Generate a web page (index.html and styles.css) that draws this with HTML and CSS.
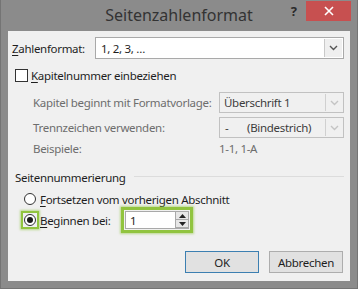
FILE: index.html
```html
<!DOCTYPE html>
<html lang="de">
<head>
<meta charset="utf-8">
<link rel="stylesheet" href="styles.css">
</head>
<body>
<div class="window">
  <div class="titlebar">
    <span></span>
    <span class="title">Seitenzahlenformat</span>
    <div class="controls">
      <span class="help">?</span>
      <span class="close"><svg width="10" height="10" viewBox="0 0 10 10"><path d="M1 1 L9 9 M9 1 L1 9" stroke="#fff" stroke-width="1.6" fill="none"/></svg></span>
    </div>
  </div>
  <div class="content">
    <div class="row format-row">
      <span class="lbl-format"><u>Z</u>ahlenformat:</span>
      <div class="combo main-combo">
        <span class="combo-val">1, 2, 3, …</span>
        <span class="combo-arrow"><svg width="9" height="6" viewBox="0 0 9 6"><path d="M1 1 L4.5 4.5 L8 1" stroke="#555" stroke-width="1.4" fill="none"/></svg></span>
      </div>
    </div>
    <div class="row check-row">
      <span class="checkbox"></span>
      <span><u>K</u>apitelnummer einbeziehen</span>
    </div>
    <div class="row sub-row first-sub">
      <span class="sub-lbl disabled">Kapitel beginnt mit Formatvorlage:</span>
      <div class="combo dis-combo">
        <span class="combo-val">Überschrift 1</span>
        <span class="combo-arrow"><svg width="9" height="6" viewBox="0 0 9 6"><path d="M1 1 L4.5 4.5 L8 1" stroke="#c4c4c4" stroke-width="1.4" fill="none"/></svg></span>
      </div>
    </div>
    <div class="row sub-row second-sub">
      <span class="sub-lbl disabled">Trennzeichen verwenden:</span>
      <div class="combo dis-combo">
        <span class="combo-val"><span class="dash">-</span>(Bindestrich)</span>
        <span class="combo-arrow"><svg width="9" height="6" viewBox="0 0 9 6"><path d="M1 1 L4.5 4.5 L8 1" stroke="#c4c4c4" stroke-width="1.4" fill="none"/></svg></span>
      </div>
    </div>
    <div class="row example-row">
      <span class="sub-lbl disabled">Beispiele:</span>
      <span class="example-val disabled">1-1, 1-A</span>
    </div>
    <div class="row group-row">
      <span>Seitennummerierung</span>
      <span class="group-line"></span>
    </div>
    <div class="row radio-row">
      <span class="radio-slot"><span class="radio"></span></span>
      <span><u>F</u>ortsetzen vom vorherigen Abschnitt</span>
    </div>
    <div class="row radio-row start-row">
      <span class="radio-slot highlight"><span class="radio checked"></span></span>
      <span class="start-lbl"><u>B</u>eginnen bei:</span>
      <div class="spin-wrap">
        <div class="spin">
          <span class="spin-val">1</span>
          <span class="spin-btns">
            <span class="spin-btn"><svg width="7" height="4" viewBox="0 0 7 4"><path d="M0 4 L3.5 0 L7 4 Z" fill="#222"/></svg></span>
            <span class="spin-btn"><svg width="7" height="4" viewBox="0 0 7 4"><path d="M0 0 L3.5 4 L7 0 Z" fill="#222"/></svg></span>
          </span>
        </div>
      </div>
    </div>
    <div class="row button-row">
      <span class="btn default">OK</span>
      <span class="btn">Abbrechen</span>
    </div>
  </div>
</div>
</body>
</html>
```

FILE: styles.css
```css
* { box-sizing: border-box; }
html, body { margin: 0; padding: 0; }
body {
  font-family: "Noto Sans", "Open Sans", sans-serif;
  font-size: 11.5px;
  color: #1e1e1e;
  background: #8a8a8a;
}
u { text-decoration: underline; text-underline-offset: 2px; }
.window {
  width: 358px;
  height: 289px;
  background: #8b8b8b;
  border: 1px solid #747474;
  border-top: none;
  display: flex;
  flex-direction: column;
}
.titlebar {
  height: 31px;
  display: grid;
  grid-template-columns: 1fr auto 1fr;
  align-items: start;
}
.title {
  font-size: 16px;
  color: #333;
  line-height: 31px;
}
.controls {
  display: flex;
  justify-content: flex-end;
  align-items: center;
  padding-top: 1px;
  padding-right: 6px;
  gap: 9px;
}
.help {
  font-weight: bold;
  font-size: 13px;
  color: #2a2a2a;
  line-height: 20px;
}
.close {
  width: 45px;
  height: 20px;
  background: #c75050;
  display: flex;
  align-items: center;
  justify-content: center;
}
.content {
  margin: 0 7px 0 7px;
  height: 250px;
  background: #f0f0f0;
  display: flex;
  flex-direction: column;
  letter-spacing: -0.3px;
  white-space: nowrap;
}
.row { display: flex; align-items: center; }
.format-row { margin-top: 6px; height: 22px; padding-left: 4px; }
.lbl-format { width: 83px; }
.combo {
  display: flex;
  align-items: stretch;
  border: 1px solid #a9a9a9;
  background: #fff;
}
.main-combo { width: 249px; height: 22px; }
.combo-val { flex: 1; display: flex; align-items: center; padding-left: 5px; }
.combo-arrow {
  width: 18px;
  display: flex;
  align-items: center;
  justify-content: center;
  background: #efefef;
  border-left: 1px solid #c9c9c9;
  margin: 1px;
}
.check-row { margin-top: 10px; height: 13px; padding-left: 7px; }
.checkbox {
  width: 13px;
  height: 13px;
  border: 1px solid #333;
  background: #fff;
  margin-right: 3px;
}
.disabled { color: #6d6d6d; }
.sub-row { padding-left: 25px; height: 21px; }
.first-sub { margin-top: 10px; }
.second-sub { margin-top: 4px; }
.sub-lbl { width: 186px; }
.dis-combo {
  width: 125px;
  height: 21px;
  background: #f0f0f0;
  border-color: #c1c1c1;
  color: #3c3c3c;
}
.dis-combo .combo-val { padding-left: 4px; }
.dis-combo .combo-arrow { background: #f0f0f0; border-left-color: #d0d0d0; width: 17px; }
.dash { width: 23px; display: inline-block; padding-left: 1px; }
.example-row { margin-top: 2px; height: 16px; padding-left: 25px; }
.group-row { margin-top: 13px; height: 16px; padding-left: 7px; }
.group-line { flex: 1; height: 1px; background: #dcdcdc; margin-left: 8px; margin-right: 6px; margin-top: -1px; }
.radio-row { height: 16px; margin-top: 6px; padding-left: 13px; }
.radio-slot {
  width: 18px;
  height: 18px;
  display: flex;
  align-items: center;
  justify-content: center;
  margin-right: 1px;
}
.radio {
  width: 12px;
  height: 12px;
  border-radius: 50%;
  border: 1px solid #333;
  background: #fff;
  display: flex;
  align-items: center;
  justify-content: center;
}
.radio.checked::after {
  content: "";
  width: 6px;
  height: 6px;
  border-radius: 50%;
  background: #1a1a1a;
}
.highlight {
  border: 2px solid #91c43f;
  box-shadow: 0 0 2px 1px rgba(145, 196, 63, 0.55);
}
.start-row { height: 26px; margin-top: 0; }
.start-lbl { width: 81px; }
.spin-wrap {
  width: 72px;
  height: 26px;
  border: 3px solid #91c43f;
  box-shadow: 0 0 2px 1px rgba(145, 196, 63, 0.55);
  padding: 1px;
  background: #f0f0f0;
}
.spin {
  height: 100%;
  border: 1px solid #a9a9a9;
  background: #fff;
  display: flex;
}
.spin-val { flex: 1; padding-left: 4px; display: flex; align-items: center; }
.spin-btns { width: 13px; display: flex; flex-direction: column; }
.spin-btn {
  flex: 1;
  display: flex;
  align-items: center;
  justify-content: center;
  background: #e6e6e6;
  border: 1px solid #a9a9a9;
  margin: -1px -1px 0 0;
}
.button-row { margin-top: 18px; justify-content: flex-end; gap: 10px; padding-right: 7px; }
.btn {
  width: 74px;
  height: 22px;
  background: #e1e1e1;
  border: 1px solid #adadad;
  display: flex;
  align-items: center;
  justify-content: center;
}
.btn.default { border-color: #3c7fb1; }
```
